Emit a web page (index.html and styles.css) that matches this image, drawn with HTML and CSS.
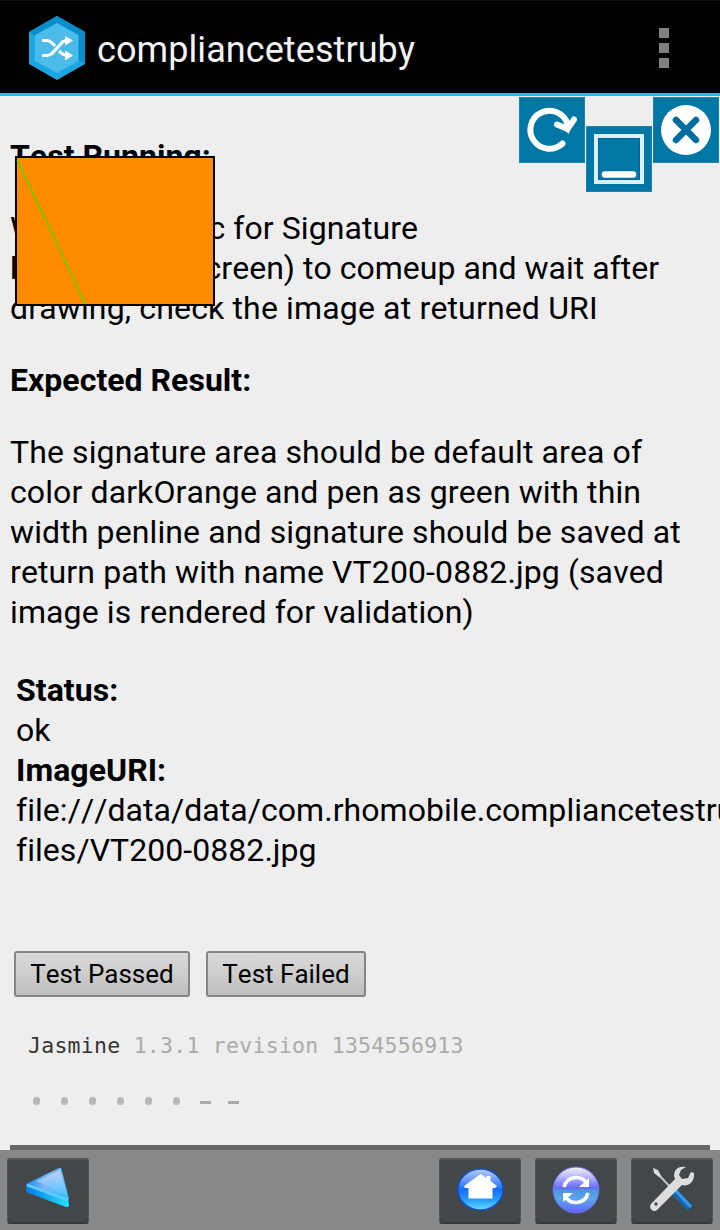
FILE: index.html
```html
<!DOCTYPE html>
<html lang="en">
<head>
<meta charset="utf-8">
<title>compliancetestruby</title>
<link rel="stylesheet" href="styles.css">
</head>
<body>
<header class="appbar">
  <svg class="logo" width="56" height="64" viewBox="0 0 56 64">
    <path fill="#1ba8e2" d="M28 0 56 16V48L28 64 0 48V16Z"/>
    <path fill="#078dca" d="M28 0 56 16V48L49 44V20L28 7 6 20 0 16Z"/>
    <path fill="#4bbbe9" d="M28 7 49.500 19V45L28 57 6 45V19Z"/>
    <g fill="none" stroke="#fff" stroke-width="3"><path d="M13 24.500h5c8 0 11 15 20 15M13 39.500h5c8 0 11-15 20-15"/></g>
    <path d="M23.500 38.500 33.500 25" stroke="#4bbbe9" stroke-width="6"/><path d="M22 38.500 34.500 25" stroke="#fff" stroke-width="3.300"/>
    <path fill="#fff" d="m36 20 8 4.500-8 5zM36 34.500l8 5-8 5z"/>
  </svg>
  <h1 class="title">compliancetestruby</h1>
  <div class="overflow"><i></i><i></i><i></i></div>
</header>
<main class="page">
  <h2 class="heading">Test Running:</h2>
  <p class="steps"><span class="line l1">Wait for 30 sec for Signature</span><span class="line l2"><span class="prefix"><span>box</span><span>(not fullscreen)</span></span> to comeup and wait after</span><span class="line l3">drawing, check the image at returned URI</span></p>
  <h2 class="heading">Expected Result:</h2>
  <p class="expected"><span class="line">The signature area should be default area of</span><span class="line">color darkOrange and pen as green with thin</span><span class="line">width penline and signature should be saved at</span><span class="line">return path with name VT200-0882.jpg (saved</span><span class="line">image is rendered for validation)</span></p>
  <div class="result"><b class="line">Status:</b><span class="line">ok</span><b class="line">ImageURI:</b><span class="line">file:///data/data/com.rhomobile.compliancetestruby/</span><span class="line">files/VT200-0882.jpg</span></div>
  <div class="buttons"><button class="btn passed">Test Passed</button><button class="btn failed">Test Failed</button></div>
  <div class="jasmine">Jasmine <span class="version">1.3.1 revision 1354556913</span></div>
  <div class="symbols"><i class="dot"></i><i class="dot"></i><i class="dot"></i><i class="dot"></i><i class="dot"></i><i class="dot"></i><i class="dash"></i><i class="dash"></i></div>
  <div class="rule"></div>
</main>
<svg class="signature" width="200" height="150" viewBox="0 0 200 150">
  <rect x="1" y="1" width="198" height="148" fill="#ff8c00" stroke="#000" stroke-width="2"/>
  <path d="M2 4 25 52 47 98 70 148" fill="none" stroke="#3fe000" stroke-width="1.300"/>
</svg>
<svg class="tool reload" width="66" height="66" viewBox="0 0 66 66">
  <rect width="66" height="66" fill="#0077a4"/><rect x=".5" y=".5" width="65" height="65" fill="none" stroke="#1b83ac"/>
  <path d="M43.500 46.500A19 19 0 1 1 48.500 27" fill="none" stroke="#fff" stroke-width="6" stroke-linecap="round"/>
  <path d="M38 27.500 48.500 32 55 22.500" fill="none" stroke="#fff" stroke-width="6" stroke-linecap="round" stroke-linejoin="miter"/>
  <path fill="#fff" d="m40 28 12-3-2 12z"/>
</svg>
<svg class="tool minimize" width="66" height="66" viewBox="0 0 66 66">
  <rect width="66" height="66" fill="#0077a4"/><rect x=".5" y=".5" width="65" height="65" fill="none" stroke="#1b83ac"/>
  <rect x="10" y="10" width="46" height="46" fill="none" stroke="#dceff5" stroke-width="4"/>
  <rect x="12.500" y="12.500" width="41" height="41" fill="none" stroke="#00659a"/>
  <path d="M19 48.500h28" stroke="#fff" stroke-width="6.500" stroke-linecap="round"/>
</svg>
<svg class="tool close" width="66" height="66" viewBox="0 0 66 66">
  <rect width="66" height="66" fill="#0077a4"/><rect x=".5" y=".5" width="65" height="65" fill="none" stroke="#1b83ac"/>
  <circle cx="33" cy="33" r="25" fill="#fff"/>
  <path d="m23 23 20 20m0-20L23 43" stroke="#006c9f" stroke-width="6.500" stroke-linecap="round"/>
</svg>
<nav class="toolbar">
  <div class="key back"><svg width="82" height="68" viewBox="0 0 82 68">
    <defs><linearGradient id="tri" x1="0" y1=".4" x2="1" y2=".6"><stop stop-color="#1387f3"/><stop offset=".45" stop-color="#7fb9f7"/><stop offset="1" stop-color="#35bdff"/></linearGradient><linearGradient id="edge"><stop stop-color="#087be9"/><stop offset="1" stop-color="#20e3ff"/></linearGradient><linearGradient id="shine" x1="0" y1="0" x2="0" y2="1"><stop stop-color="#c9cff8"/><stop offset="1" stop-color="#43c2ff"/></linearGradient></defs>
    <path fill="url(#tri)" d="M19 26 52 10q2-1 2.500 1L62 41 21 30z"/>
    <path fill="url(#shine)" d="M30 23 53 12 61 39z"/>
    <path fill="url(#edge)" d="m19 26 42 14 1 7q0 2-3 2L19 34z"/>
    <path d="m20 27 41 15" stroke="#65caff" stroke-width="2.500"/>
  </svg></div>
  <div class="key home"><svg width="82" height="68" viewBox="0 0 82 68">
    <defs><linearGradient id="orb" x1="0" y1="0" x2="0" y2="1"><stop stop-color="#b9ccff"/><stop offset=".3" stop-color="#5e96ff"/><stop offset=".5" stop-color="#146eff"/><stop offset=".75" stop-color="#259bff"/><stop offset="1" stop-color="#69dcff"/></linearGradient></defs>
    <ellipse cx="41.500" cy="31.500" rx="22.500" ry="20.500" fill="url(#orb)" stroke="#124dcc" stroke-width="1.500"/>
    <path fill="#fff" d="M25 28 41.500 16l6 4v-2h4v5L58 28l-2 2h-2.500v10.500h-24V30H26z"/>
  </svg></div>
  <div class="key sync"><svg width="82" height="68" viewBox="0 0 82 68">
    <defs><linearGradient id="ball" x1="0" y1="0" x2="0" y2="1"><stop stop-color="#f2efff"/><stop offset=".2" stop-color="#bcbcfb"/><stop offset=".46" stop-color="#6668f8"/><stop offset=".5" stop-color="#4b96df"/><stop offset=".7" stop-color="#5ba5ef"/><stop offset="1" stop-color="#6360fb"/></linearGradient></defs>
    <circle cx="41" cy="32" r="23" fill="url(#ball)" stroke="#6a70e5"/>
    <path d="M29 29A12.500 12.500 0 0 1 51.500 25M53 35A12.500 12.500 0 0 1 30.500 39" fill="none" stroke="#fff" stroke-width="3.500"/>
    <path fill="#fff" d="m54 20v9H44zM28 44v-9h10z"/>
  </svg></div>
  <div class="key settings"><svg width="82" height="68" viewBox="0 0 82 68">
    <path d="m25 14 18 19" stroke="#c4c6c7" stroke-width="2"/><path fill="#ddd" d="m22 10 5 2 3 6-2 1-5-4z"/>
    <path d="m41 31 18 19" stroke="#1268b4" stroke-width="7"/><path d="m43 31 17 18" stroke="#3999e0" stroke-width="3"/>
    <path fill="#dededf" d="M55 9c-9-2-14 5-11 12L20 46c-3 4 2 9 6 6l25-25c7 2 13-4 12-12l-3-1-3 6-6 1-3-4 2-5z"/>
    <circle cx="25" cy="46" r="1.700" fill="#42474a"/>
  </svg></div>
</nav>
</body>
</html>
```
FILE: styles.css
```css
* { box-sizing: border-box; }
body { margin: 0; width: 720px; height: 1230px; overflow: hidden; position: relative; display: flex; flex-direction: column; background: #eee; color: #000; font: 32px/40px Roboto, sans-serif; font-kerning: none; }
.appbar { height: 96px; flex: none; display: flex; align-items: center; padding: 1px 51px 0 29px; background: #000; border-top: 1px solid #111; border-bottom: 3px solid #33b5e5; }
.logo { flex: none; }
.title { margin: 4px 0 0 12px; font-size: 36px; font-weight: 400; letter-spacing: .08px; color: #f3f3f3; }
.overflow { margin: 0 0 0 auto; display: grid; gap: 5px; }
.overflow i { width: 10px; height: 10px; background: #808080; }
.page { height: 1054px; flex: none; padding: 40px 10px 0; overflow: hidden; }
.heading { margin: 0; font-size: 32px; line-height: 40px; font-weight: 700; letter-spacing: .03px; }
.steps, .expected { margin: 32px 0; }
.expected { letter-spacing: .11px; }
.line { display: block; white-space: nowrap; }
.l1 { letter-spacing: .07px; }
.l2 { letter-spacing: .02px; }
.l3 { letter-spacing: .15px; }
.prefix { display: inline-flex; justify-content: space-between; width: 285px; }
.result { margin: 38px 0 0 6px; letter-spacing: .05px; }
.buttons { display: flex; gap: 16px; margin: 81px 0 0 4px; }
.btn { height: 46px; padding: 0; font: 26px/40px Roboto, sans-serif; font-kerning: none; color: #000; border: 2px solid #858585; border-radius: 3px; background: linear-gradient(#dadada, #bfbfbf); white-space: nowrap; }
.passed { width: 176px; }
.failed { width: 160px; }
.jasmine { margin: 34px 0 0 18px; height: 30px; font: 21.500px/30px "Droid Sans Mono", "DejaVu Sans Mono", monospace; letter-spacing: .26px; color: #333; white-space: pre; }
.version { color: #aaa; }
.symbols { display: flex; margin: 36px 0 0 23px; height: 9px; }
.symbols i { width: 28px; display: flex; }
.dot::before { content: ""; width: 7px; height: 8px; border-radius: 4px; background: #b7b7b7; }
.dash::before { content: ""; width: 11px; height: 3px; margin: 4px 0 0 -1px; background: #aaa; }
.rule { height: 5px; margin-top: 39px; background: #666; }
.toolbar { height: 80px; flex: none; display: flex; gap: 14px; padding: 8px 7px 0; background: #888; }
.key { width: 82px; height: 66px; border: 1px solid #51565a; border-top: 2px solid #515659; border-bottom: 2px solid #34393c; border-radius: 3px; background: #42474a; }
.key svg { display: block; margin: -2px 0 0 -1px; }
.back { margin-right: auto; }
.signature { position: absolute; left: 15px; top: 156px; }
.tool { position: absolute; }
.reload { left: 519px; top: 97px; }
.minimize { left: 586px; top: 126px; }
.close { left: 653px; top: 97px; }
```
